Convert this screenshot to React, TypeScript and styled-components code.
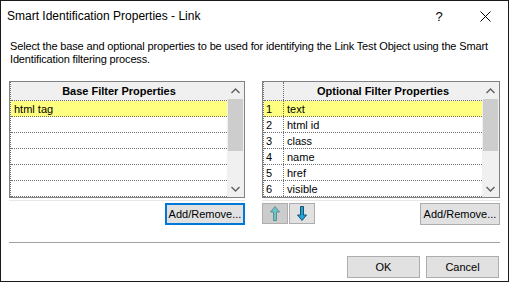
import React from 'react';
import styled, { createGlobalStyle } from 'styled-components';

const GlobalStyle = createGlobalStyle`
  html, body {
    margin: 0;
    padding: 0;
    background: #ffffff;
  }
  * { box-sizing: border-box; }
`;

const FONT = `"Liberation Sans", Arial, sans-serif`;

const optionalRows = ['text', 'html id', 'class', 'name', 'href', 'visible'];
const baseRows = ['html tag', '', '', '', '', ''];

const App: React.FC = () => {
    return (
        <>
            <GlobalStyle />
            <Window>
                <TitleBar>
                    <Title>Smart Identification Properties - Link</Title>
                    <TitleButton>?</TitleButton>
                    <TitleButton>
                        <svg width="11" height="11" viewBox="0 0 11 11">
                            <path d="M0.5 0.5 L10.5 10.5 M10.5 0.5 L0.5 10.5" stroke="#000" strokeWidth="1" />
                        </svg>
                    </TitleButton>
                </TitleBar>

                <Body>
                    <Description>
                        Select the base and optional properties to be used for identifying the Link Test Object using the Smart Identification filtering process.
                    </Description>

                    <Panels>
                        <Panel>
                            <Grid>
                                <Table>
                                    <HeaderRow>
                                        <HeaderCell>Base Filter Properties</HeaderCell>
                                    </HeaderRow>
                                    {baseRows.map((r, i) => (
                                        <Row key={i} selected={i === 0}>
                                            <Cell>{r}</Cell>
                                        </Row>
                                    ))}
                                </Table>
                                <ScrollBar />
                            </Grid>
                            <Shadow />
                            <ButtonRow>
                                <Spacer />
                                <SmallButton focused>Add/Remove...</SmallButton>
                            </ButtonRow>
                        </Panel>

                        <Panel>
                            <Grid>
                                <Table>
                                    <HeaderRow>
                                        <NumCell />
                                        <HeaderCell>Optional Filter Properties</HeaderCell>
                                    </HeaderRow>
                                    {optionalRows.map((r, i) => (
                                        <Row key={r} selected={i === 0}>
                                            <NumCell>{i + 1}</NumCell>
                                            <Cell>{r}</Cell>
                                        </Row>
                                    ))}
                                </Table>
                                <ScrollBar />
                            </Grid>
                            <Shadow />
                            <ButtonRow>
                                <ArrowButton pressed>
                                    <svg width="10" height="15" viewBox="0 0 10 15">
                                        <path d="M5 0.5 L9.5 6 L6.5 6 L6.5 14.5 L3.5 14.5 L3.5 6 L0.5 6 Z" fill="#6fc3c8" stroke="#5a8f98" strokeWidth="1" />
                                    </svg>
                                </ArrowButton>
                                <ArrowButton>
                                    <svg width="10" height="15" viewBox="0 0 10 15">
                                        <path d="M5 14.5 L9.5 9 L6.5 9 L6.5 0.5 L3.5 0.5 L3.5 9 L0.5 9 Z" fill="#1aa7d8" stroke="#1d4f6e" strokeWidth="1" />
                                    </svg>
                                </ArrowButton>
                                <Spacer />
                                <SmallButton>Add/Remove...</SmallButton>
                            </ButtonRow>
                        </Panel>
                    </Panels>

                    <Separator />

                    <Footer>
                        <DialogButton>OK</DialogButton>
                        <DialogButton>Cancel</DialogButton>
                    </Footer>
                </Body>
            </Window>
        </>
    );
};

export default App;

const ScrollBar: React.FC = () => (
    <Scroll>
        <ScrollArrow>
            <svg width="9" height="6" viewBox="0 0 9 6">
                <path d="M0.5 5 L4.5 1 L8.5 5" stroke="#606060" strokeWidth="1.4" fill="none" />
            </svg>
        </ScrollArrow>
        <Thumb />
        <Spacer />
        <ScrollArrow>
            <svg width="9" height="6" viewBox="0 0 9 6">
                <path d="M0.5 1 L4.5 5 L8.5 1" stroke="#606060" strokeWidth="1.4" fill="none" />
            </svg>
        </ScrollArrow>
    </Scroll>
);

const Window = styled.div`
width: 509px;
height: 282px;
border: 1px solid #1a1a1a;
background: #ffffff;
display: flex;
flex-direction: column;
font-family: ${FONT};
font-size: 11px;
color: #000;
`

const TitleBar = styled.div`
height: 30px;
display: flex;
align-items: center;
padding-left: 6px;
`

const Title = styled.div`
flex: 1;
font-size: 12px;
`

const TitleButton = styled.div`
width: 46px;
height: 30px;
display: flex;
align-items: center;
justify-content: center;
font-size: 13px;
`

const Body = styled.div`
flex: 1;
display: flex;
flex-direction: column;
padding: 0 8px;
`

const Description = styled.div`
margin-top: 9px;
padding-left: 1px;
line-height: 13px;
letter-spacing: -0.15px;
`

const Panels = styled.div`
display: grid;
grid-template-columns: 236px 238px;
column-gap: 17px;
margin-top: 15px;
`

const Panel = styled.div`
display: flex;
flex-direction: column;
`

const Grid = styled.div`
height: 117px;
border: 1px solid #828282;
display: flex;
`

const Table = styled.div`
flex: 1;
display: flex;
flex-direction: column;
border-left: 1px dotted #6e6e6e;
overflow: hidden;
`

const HeaderRow = styled.div`
height: 19px;
flex: none;
display: flex;
background: #f0f0f0;
border-bottom: 1px dotted #6e6e6e;
`

const HeaderCell = styled.div`
flex: 1;
display: flex;
align-items: center;
justify-content: center;
font-weight: bold;
`

const Row = styled.div<{ selected?: boolean }>`
height: 16px;
flex: none;
display: flex;
background: ${p => (p.selected ? '#ffff80' : '#ffffff')};
border-bottom: 1px dotted #6e6e6e;
`

const Cell = styled.div`
flex: 1;
display: flex;
align-items: center;
padding-left: 3px;
white-space: nowrap;
`

const NumCell = styled.div`
width: 20px;
flex: none;
display: flex;
align-items: center;
padding-left: 2px;
border-right: 1px dotted #6e6e6e;
`

const Scroll = styled.div`
width: 17px;
flex: none;
background: #f0f0f0;
display: flex;
flex-direction: column;
`

const ScrollArrow = styled.div`
height: 17px;
display: flex;
align-items: center;
justify-content: center;
`

const Thumb = styled.div`
height: 52px;
margin: 0 1px;
background: #cdcdcd;
`

const Spacer = styled.div`
flex: 1;
`

const Shadow = styled.div`
height: 1px;
margin-top: 2px;
background: #e8e8e8;
`

const ButtonRow = styled.div`
display: flex;
gap: 1px;
margin-top: 2px;
`

const SmallButton = styled.button<{ focused?: boolean }>`
width: 80px;
height: 22px;
padding: 0;
font-family: ${FONT};
font-size: 11px;
color: #000;
background: #e1e1e1;
border: ${p => (p.focused ? '2px solid #0078d7' : '1px solid #adadad')};
`

const ArrowButton = styled.button<{ pressed?: boolean }>`
width: 26px;
height: 21px;
padding: 0;
display: flex;
align-items: center;
justify-content: center;
background: ${p => (p.pressed ? '#cccccc' : '#e1e1e1')};
border: 1px solid #adadad;
`

const Separator = styled.div`
height: 1px;
margin-top: 17px;
background: #a0a0a0;
`

const Footer = styled.div`
display: flex;
justify-content: flex-end;
gap: 6px;
margin-top: 13px;
padding-right: 1px;
`

const DialogButton = styled.button`
width: 73px;
height: 22px;
padding: 0;
font-family: ${FONT};
font-size: 11px;
color: #000;
background: #e1e1e1;
border: 1px solid #adadad;
`
